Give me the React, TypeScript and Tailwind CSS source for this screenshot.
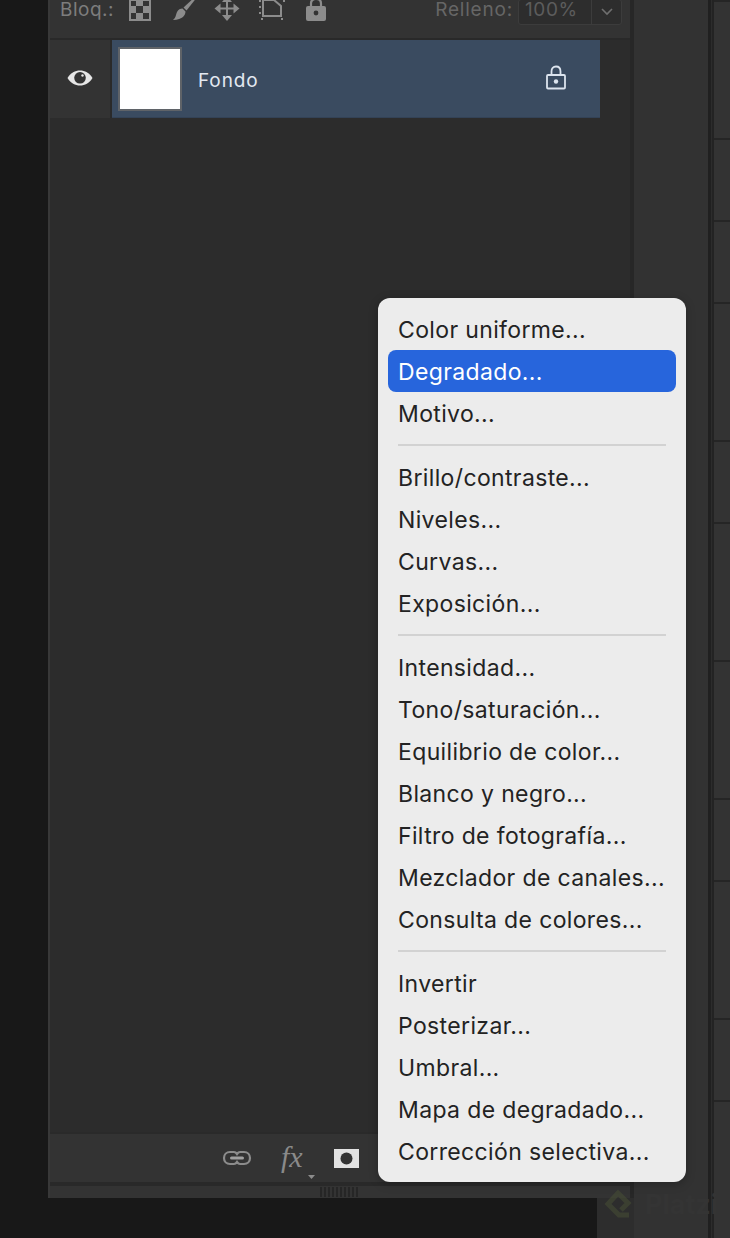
const menuGroups = [
  ["Color uniforme...", "Degradado...", "Motivo..."],
  ["Brillo/contraste...", "Niveles...", "Curvas...", "Exposición..."],
  ["Intensidad...", "Tono/saturación...", "Equilibrio de color...", "Blanco y negro...", "Filtro de fotografía...", "Mezclador de canales...", "Consulta de colores..."],
  ["Invertir", "Posterizar...", "Umbral...", "Mapa de degradado...", "Corrección selectiva..."],
];

const stripHeights = [137, 81, 81, 137, 81, 137, 137, 81, 137, 81, 137];

function CheckerIcon() {
  return (
    <svg width="22" height="22" viewBox="0 0 22 22" className="shrink-0">
      <rect width="22" height="22" fill="#8c8c8c" />
      <rect x="2" y="2" width="5" height="5" fill="#333333" />
      <rect x="14" y="2" width="6" height="5" fill="#333333" />
      <rect x="7" y="7" width="7" height="7" fill="#333333" />
      <rect x="2" y="14" width="5" height="6" fill="#333333" />
      <rect x="14" y="14" width="6" height="6" fill="#333333" />
    </svg>
  );
}

function BrushIcon() {
  return (
    <svg width="26" height="26" viewBox="0 0 26 26" fill="#8c8c8c" className="shrink-0">
      <path d="M24 0 L26 0 L14.5 14.5 L11.5 11.5 Z" />
      <path d="M10.5 12.5 L13.5 15.5 C13.5 19 11 23.5 1 24 C4 21.5 3.5 19.5 5 16 C6 13.5 8.5 12.5 10.5 12.5 Z" />
    </svg>
  );
}

function MoveIcon() {
  return (
    <svg width="26" height="26" viewBox="0 0 26 26" fill="#8c8c8c" className="shrink-0">
      <path d="M13 0 L18 6 L8 6 Z" />
      <path d="M13 25 L18 19 L8 19 Z" />
      <path d="M0.5 12.5 L6.5 7.5 L6.5 17.5 Z" />
      <path d="M25.5 12.5 L19.5 7.5 L19.5 17.5 Z" />
      <rect x="12" y="5" width="2" height="15" />
      <rect x="6" y="11.5" width="14" height="2" />
    </svg>
  );
}

function ArtboardIcon() {
  return (
    <svg width="28" height="24" viewBox="0 0 28 24" fill="none" stroke="#8c8c8c" className="shrink-0">
      <path d="M5 3 H16 L23 9 V19 H5 Z" strokeWidth="2" />
      <g fill="#8c8c8c" stroke="none">
        <rect x="1" y="3" width="2" height="2" />
        <rect x="1" y="9" width="2" height="2" />
        <rect x="1" y="15" width="2" height="2" />
        <rect x="3" y="21" width="2" height="2" />
        <rect x="23" y="21" width="2" height="2" />
        <rect x="25" y="3" width="2" height="2" />
        <rect x="21" y="0" width="2" height="2" />
      </g>
    </svg>
  );
}

function LockSolidIcon() {
  return (
    <svg width="22" height="24" viewBox="0 0 22 24" className="shrink-0">
      <path d="M6 10 V6.5 C6 3.5 8 2 11 2 C14 2 16 3.5 16 6.5 V10" fill="none" stroke="#8c8c8c" strokeWidth="2.2" />
      <rect x="1" y="9" width="20" height="15" rx="2" fill="#8c8c8c" />
      <circle cx="11" cy="16" r="2.4" fill="#333333" />
    </svg>
  );
}

function EyeIcon() {
  return (
    <svg width="26" height="16" viewBox="0 0 26 16" className="shrink-0">
      <path d="M0.5 8 C4 2.5 8 0.5 13 0.5 C18 0.5 22 2.5 25.5 8 C22 13.5 18 15.5 13 15.5 C8 15.5 4 13.5 0.5 8 Z" fill="#e6e6e6" />
      <circle cx="13" cy="7.8" r="5.8" fill="#333333" />
      <circle cx="15.5" cy="5.5" r="1.2" fill="#e6e6e6" />
    </svg>
  );
}

function LockOutlineIcon() {
  return (
    <svg width="22" height="25" viewBox="0 0 22 25" fill="none" className="shrink-0">
      <path d="M6.5 11 V6.5 C6.5 3.5 8.2 1.5 11 1.5 C13.8 1.5 15.5 3.5 15.5 6.5 V11" stroke="#dce4ee" strokeWidth="1.8" />
      <rect x="2" y="10" width="18" height="13.5" rx="1" stroke="#dce4ee" strokeWidth="1.8" />
      <circle cx="11" cy="16.5" r="2.2" fill="#dce4ee" />
    </svg>
  );
}

function LinkIcon() {
  return (
    <svg width="30" height="16" viewBox="0 0 30 16" fill="none" className="shrink-0">
      <path d="M12 2 H8 C4.5 2 2 4.5 2 8 C2 11.5 4.5 14 8 14 H12 C13.5 14 14.3 13 15 12 C15.7 13 16.5 14 18 14 H22 C25.5 14 28 11.5 28 8 C28 4.5 25.5 2 22 2 H18 C16.5 2 15.7 3 15 4 C14.3 3 13.5 2 12 2 Z" stroke="#8c8c8c" strokeWidth="2.2" />
      <rect x="8" y="6.5" width="14" height="3" rx="1.5" fill="#a0a0a0" />
    </svg>
  );
}

function MaskIcon() {
  return (
    <svg width="25" height="19" viewBox="0 0 25 19" className="shrink-0">
      <rect width="25" height="19" fill="#e2e2e2" />
      <circle cx="12.5" cy="9.5" r="6" fill="#333333" />
    </svg>
  );
}

function ChevronIcon() {
  return (
    <svg width="12" height="8" viewBox="0 0 12 8" fill="none">
      <path d="M1 1 L6 6 L11 1" stroke="#6f6f6f" strokeWidth="1.6" />
    </svg>
  );
}

function Toolbar() {
  return (
    <div className="h-[40px] shrink-0 bg-[#333333] border-b-2 border-[#292929] flex items-start pl-[10px] pr-[8px]">
      <span className="text-[19px] leading-[19px] tracking-[0.5px] text-[#7d7d7d] w-[69px]">Bloq.:</span>
      <div className="flex items-start -mt-[1px]">
        <CheckerIcon />
        <div className="-mt-[3px] ml-[21px]"><BrushIcon /></div>
        <div className="-mt-[3px] ml-[16px]"><MoveIcon /></div>
        <div className="-mt-[2px] ml-[18px]"><ArtboardIcon /></div>
        <div className="-mt-[2px] ml-[19px]"><LockSolidIcon /></div>
      </div>
      <div className="ml-auto flex items-start">
        <span className="text-[19px] leading-[19px] tracking-[0.8px] text-[#666666] mr-[5px]">Relleno:</span>
        <div className="h-[26px] -mt-[1px] flex border border-[#3c3c3c] rounded-[3px] bg-[#2d2d2d]">
          <span className="w-[73px] pl-[6px] text-[19px] leading-[19px] tracking-[0.6px] text-[#5c5c5c] border-r border-[#3c3c3c]">100%</span>
          <span className="w-[29px] flex items-center justify-center"><ChevronIcon /></span>
        </div>
      </div>
    </div>
  );
}

function LayerRow() {
  return (
    <div className="h-[78px] shrink-0 flex">
      <div className="w-[60px] bg-[#333333] flex items-center justify-center pb-[3px]">
        <EyeIcon />
      </div>
      <div className="w-[2px] bg-[#2a2a2a]" />
      <div className="w-[488px] bg-[#3a4b60] flex items-center pl-[6px] pr-[33px] border-b border-[#334256]">
        <div className="w-[64px] h-[64px] bg-white border-2 border-[#5f6368] shrink-0" />
        <span className="ml-[16px] pt-[6px] text-[19px] tracking-[0.9px] text-[#e3e9f1]">Fondo</span>
        <div className="ml-auto -mt-[3px]"><LockOutlineIcon /></div>
      </div>
    </div>
  );
}

function BottomBar() {
  return (
    <div className="h-[54px] shrink-0 bg-[#333333] border-t-2 border-[#2a2a2a] border-b-4 border-b-[#292929] flex items-center relative pl-[172px]">
      <LinkIcon />
      <span className="ml-[29px] text-[30px] leading-none italic text-[#8a8a8a] -mt-[3px] w-[25px]" style={{ fontFamily: '"Liberation Serif", serif' }}>fx</span>
      <div className="ml-[28px]"><MaskIcon /></div>
      <svg width="7" height="4" viewBox="0 0 7 4" className="absolute left-[258px] top-[41px]">
        <path d="M0 0 H7 L3.5 4 Z" fill="#8c8c8c" />
      </svg>
    </div>
  );
}

function Gripper() {
  const ticks = Array.from({ length: 10 });
  return (
    <div className="h-[12px] shrink-0 bg-[#333333] flex justify-start pl-[270px] py-[1px]">
      <div className="flex gap-[2px] h-full">
        {ticks.map((_, i) => (
          <div key={i} className="w-[2px] bg-[#262626]" />
        ))}
      </div>
    </div>
  );
}

function Panel() {
  return (
    <div className="w-[586px] shrink-0 flex flex-col">
      <div className="h-[1198px] shrink-0 flex flex-col bg-[#2c2c2c] border-r-4 border-[#272727] border-l-2 border-l-[#383838]">
        <Toolbar />
        <LayerRow />
        <div className="flex-1 bg-[#2c2c2c]" />
        <BottomBar />
        <Gripper />
      </div>
      <div className="flex-1 flex">
        <div className="w-[549px] bg-[#181818]" />
        <div className="flex-1 bg-[#2d2d2d]" />
      </div>
    </div>
  );
}

function RightStrip() {
  return (
    <div className="flex-1 flex">
      <div className="w-[74px] bg-[#323232]" />
      <div className="w-[3px] bg-[#202020]" />
      <div className="w-[1px] bg-[#2c2c2c]" />
      <div className="w-[2px] bg-[#232323]" />
      <div className="flex-1 flex flex-col border-t-2 border-[#252525]">
        {stripHeights.map((h, i) => (
          <div key={i} className="shrink-0 bg-[#333333] border-b-2 border-[#252525]" style={{ height: h + 1 }} />
        ))}
      </div>
    </div>
  );
}

function Menu() {
  return (
    <div
      className="absolute left-[378px] top-[298px] w-[308px] bg-[#ececec] rounded-[12px] p-[10px] text-[#232323] text-[23px] tracking-[0.36px] shadow-[0_2px_10px_rgba(0,0,0,0.25)]"
      style={{ fontFamily: 'Inter, "Liberation Sans", sans-serif' }}
    >
      {menuGroups.map((group, gi) => (
        <div key={gi}>
          {gi > 0 && (
            <div className="h-[22px] flex items-center px-[10px]">
              <div className="h-[2px] w-full bg-[#d2d2d2]" />
            </div>
          )}
          {group.map((item) => (
            <div
              key={item}
              className={
                item === "Degradado..."
                  ? "h-[42px] px-[10px] pt-[2px] flex items-center rounded-[8px] bg-[#2765dc] text-white whitespace-nowrap"
                  : "h-[42px] px-[10px] pt-[2px] flex items-center whitespace-nowrap"
              }
            >
              {item}
            </div>
          ))}
        </div>
      ))}
    </div>
  );
}

function Watermark() {
  return (
    <div className="absolute left-[601px] top-[1184px] flex items-center gap-[8px]">
      <svg width="36" height="42" viewBox="0 0 36 42" fill="none" className="opacity-50">
        <path d="M20 26 L27 19 L17 9 L7 20 L18 31 L28 31" stroke="#4a5236" strokeWidth="5" />
      </svg>
      <span className="text-[27px] font-bold text-[#343434]" style={{ fontFamily: 'Inter, sans-serif' }}>Platzi</span>
    </div>
  );
}

export default function App() {
  return (
    <div
      className="relative w-[730px] h-[1238px] overflow-hidden bg-[#181818] flex"
      style={{ fontFamily: 'Inter, "Liberation Sans", sans-serif' }}
    >
      <div className="w-[48px] shrink-0 bg-[#181818]" />
      <Panel />
      <RightStrip />
      <Watermark />
      <Menu />
    </div>
  );
}
